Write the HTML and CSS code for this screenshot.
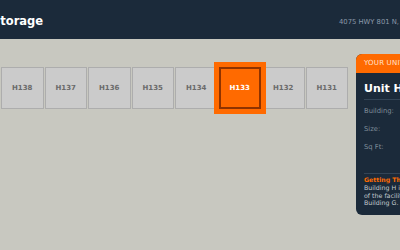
FILE: index.html
```html
<!DOCTYPE html>
<html>
<head>
<meta charset="utf-8">
<link rel="stylesheet" href="styles.css">
</head>
<body>
<div class="page">
  <header class="topbar">
    <div class="brand">Storage</div>
    <div class="address">4075 HWY 801 N, Advance, NC</div>
  </header>
  <main class="main">
    <div class="units">
      <div class="unit">H138</div>
      <div class="unit">H137</div>
      <div class="unit">H136</div>
      <div class="unit">H135</div>
      <div class="unit">H134</div>
      <div class="unit selected">H133</div>
      <div class="unit">H132</div>
      <div class="unit">H131</div>
    </div>
    <aside class="panel">
      <div class="panel-head">YOUR UNIT</div>
      <div class="panel-body">
        <div class="panel-title">Unit H133</div>
        <div class="rows">
          <div class="row"><span>Building:</span><span class="val">H</span></div>
          <div class="row"><span>Size:</span><span class="val">10x10</span></div>
          <div class="row"><span>Sq Ft:</span><span class="val">100</span></div>
        </div>
        <div class="directions">
          <div class="dir-title">Getting There</div>
          <p class="dir-text">Building H is at the back<br>of the facility, behind<br>Building G.</p>
        </div>
      </div>
    </aside>
  </main>
</div>
</body>
</html>
```
FILE: styles.css
```css
html, body {
  margin: 0;
  padding: 0;
}
body {
  background: #c8c8c0;
  font-family: "DejaVu Sans", sans-serif;
  overflow: hidden;
  width: 400px;
  height: 250px;
}
.page {
  width: 560px;
}
.topbar {
  height: 39px;
  background: #1b2a3a;
  display: grid;
  grid-template-columns: 339px auto;
  align-items: center;
}
.brand {
  color: #ffffff;
  font-weight: bold;
  font-size: 11.5px;
  margin-left: -8px;
  padding-top: 2px;
}
.address {
  color: #8a98a8;
  font-size: 6.8px;
  white-space: nowrap;
  padding-top: 5px;
}
.main {
  display: flex;
  align-items: flex-start;
  padding-top: 15px;
}
.units {
  display: flex;
  gap: 1px;
  margin-left: 1px;
  margin-top: 13px;
}
.unit {
  box-sizing: border-box;
  width: 42.5px;
  height: 42px;
  background: #cbcbcb;
  border: 1px solid #adadad;
  display: flex;
  align-items: center;
  justify-content: center;
  font-size: 7px;
  font-weight: bold;
  color: #6a6a6a;
}
.unit.selected {
  position: relative;
  z-index: 1;
  background: #ff6a00;
  border: 2px solid #8f3300;
  box-shadow: 0 0 0 5px #ff6a00;
  color: #ffffff;
}
.panel {
  margin-left: 8px;
  width: 170px;
  flex-shrink: 0;
  background: #1b2a3a;
  border-radius: 6px;
  overflow: hidden;
}
.panel-head {
  background: #ff6a00;
  color: #ffe2cf;
  font-size: 7px;
  line-height: 8px;
  padding: 5px 8px 6px;
  letter-spacing: 0.2px;
}
.panel-body {
  padding: 9px 8px 8px;
}
.panel-title {
  color: #ffffff;
  font-weight: bold;
  font-size: 11px;
  line-height: 13px;
  padding-bottom: 4px;
  border-bottom: 1px solid #334456;
}
.rows {
  padding-top: 1.5px;
  padding-bottom: 17px;
  border-bottom: 1px solid #334456;
}
.row {
  display: flex;
  justify-content: space-between;
  height: 18.3px;
  align-items: center;
  font-size: 6.8px;
  color: #7f8c99;
}
.val {
  color: #ffffff;
}
.directions {
  padding-top: 2px;
}
.dir-title {
  color: #ff6a00;
  font-weight: bold;
  font-size: 6.2px;
  line-height: 8px;
}
.dir-text {
  margin: 0;
  color: #c4cad0;
  font-size: 6.3px;
  line-height: 7.4px;
}
```
